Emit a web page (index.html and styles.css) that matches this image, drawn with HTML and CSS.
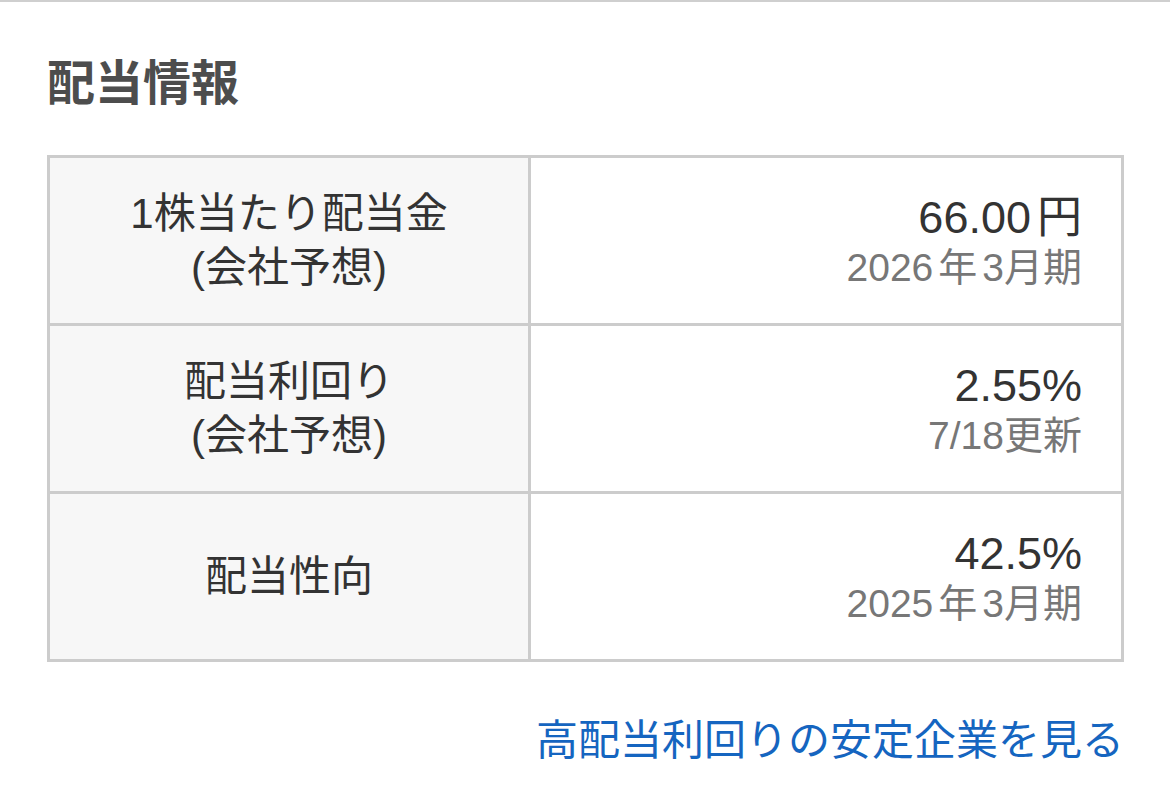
FILE: index.html
```html
<!DOCTYPE html>
<html lang="ja">
<head>
<meta charset="utf-8">
<link rel="stylesheet" href="styles.css">
</head>
<body>
<div class="page">
  <h2 class="title">配当情報</h2>
  <table class="dividend">
    <colgroup><col class="col-label"><col class="col-value"></colgroup>
    <tbody>
      <tr>
        <th>1株当たり配当金<br>(会社予想)</th>
        <td><div class="val">66.00<span class="unit">円</span></div><div class="sub">2026<span class="jp">年</span>3月期</div></td>
      </tr>
      <tr>
        <th>配当利回り<br>(会社予想)</th>
        <td><div class="val">2.55%</div><div class="sub">7/18更新</div></td>
      </tr>
      <tr>
        <th>配当性向</th>
        <td><div class="val">42.5%</div><div class="sub">2025<span class="jp">年</span>3月期</div></td>
      </tr>
    </tbody>
  </table>
  <div class="more"><a href="#" class="more-link">高配当利回りの安定企業を見る</a></div>
</div>
</body>
</html>
```

FILE: styles.css
```css
html, body {
  margin: 0;
  padding: 0;
  background: #fff;
}
body {
  font-family: "Liberation Sans", "Noto Sans CJK JP", sans-serif;
  color: #333;
}
.page {
  border-top: 2px solid #cfcfcf;
  padding: 0 46px 0 47px;
}
.title {
  margin: 0;
  padding-top: 48px;
  font-size: 48px;
  line-height: 58px;
  font-weight: 700;
  color: #4d4d4d;
  font-family: "Noto Sans CJK JP", sans-serif;
}
.dividend {
  margin-top: 47px;
  width: 100%;
  border-collapse: collapse;
  table-layout: fixed;
  border: 3px solid #cccccc;
}
.col-label { width: 481px; }
.dividend th,
.dividend td {
  border: 3px solid #cccccc;
  height: 165px;
  padding: 0;
  vertical-align: middle;
}
.dividend th {
  background: #f7f7f7;
  font-weight: 400;
  font-size: 42px;
  line-height: 54px;
  text-align: center;
  color: #333;
}
.dividend td {
  text-align: right;
  padding-right: 39px;
}
.val {
  font-size: 45px;
  line-height: 54px;
  color: #333;
}
.unit {
  margin-left: 6px;
}
.sub {
  font-size: 39px;
  line-height: 46px;
  color: #777;
}
.jp {
  margin: 0 5px;
}
.more {
  text-align: right;
  padding-top: 54px;
}
.more-link {
  font-size: 42px;
  line-height: 50px;
  color: #1565c0;
  text-decoration: none;
}
```
